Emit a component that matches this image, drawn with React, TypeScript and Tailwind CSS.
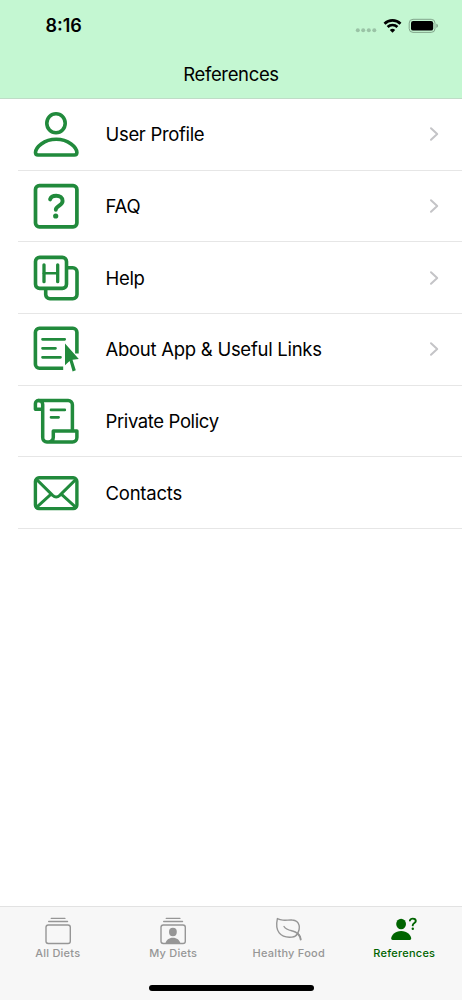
import type { ReactNode } from "react";

const svgProps = {
  viewBox: "0 0 48 48",
  fill: "none",
  stroke: "currentColor",
  strokeLinecap: "round",
  strokeLinejoin: "round",
  className: "size-12 shrink-0 text-[#218a3c]",
} as const;

const ProfileIcon = () => (
  <svg {...svgProps} strokeWidth="3.6">
    <ellipse cx="24" cy="13.2" rx="9.2" ry="9.5" />
    <path d="M24.2 29.3C12 29.3 3.500 37.500 3.500 42.600c0 1.600.9 2.400 2.500 2.400h36.400c1.600 0 2.500-.8 2.500-2.400C44.900 37.500 36.400 29.300 24.200 29.300Z" />
  </svg>
);

const FaqIcon = () => (
  <svg {...svgProps} strokeWidth="3.7">
    <rect x="3.500" y="3.700" width="41.400" height="41.200" rx="3.800" />
    <path strokeWidth="3.900" d="M18.100 17.400c.7-2.400 2.900-3.700 6.100-3.700 3.800 0 6.400 2.100 6.400 5.200 0 3.700-4.100 4.500-6 7-.7.8-.8 1.200-.8 1.900" />
    <circle cx="23.700" cy="34" r="2.600" fill="currentColor" stroke="none" />
  </svg>
);

const HelpIcon = () => (
  <svg {...svgProps} strokeWidth="3.600">
    <rect x="3.500" y="3.400" width="31" height="31" rx="4.200" />
    <path strokeLinecap="butt" d="M35 13.800h5.800a4.200 4.200 0 0 1 4.200 4.200v22.600a4.200 4.200 0 0 1-4.200 4.200H17.900a4.200 4.200 0 0 1-4.200-4.200V35.200" />
    <path strokeWidth="3.300" d="M12 10.800v16.900M25.700 10.800v16.900" />
    <path strokeWidth="2.600" d="M12 19.300h13.700" />
  </svg>
);

const AboutIcon = () => (
  <svg {...svgProps} strokeWidth="3.600">
    <path strokeLinecap="butt" d="M31.200 43.200H7.400a4 4 0 0 1-4-4V7.300a4 4 0 0 1 4-4h33.500a4 4 0 0 1 4 4v21.300" />
    <path strokeWidth="2.700" d="M10.500 14.300h22.200M10.500 23.300h13M10.500 32.300h18" />
    <path fill="currentColor" stroke="none" d="M33 18.600v21.600l4.600-4.100 3 10.400 3.200-1.200-3.300-10.600 6.300-.7Z" />
  </svg>
);

const PolicyIcon = () => (
  <svg {...svgProps} strokeWidth="3.500">
    <path d="M6.600 3.600h29.600a4.200 4.200 0 0 1 4.200 4.200v25.500" />
    <path d="M10.700 12.200H3.400V6.800a3.200 3.200 0 0 1 3.200-3.200c2.300 0 4.100 1.700 4.100 4v33a4.300 4.300 0 0 0 4.300 4.400h25.500a4.400 4.400 0 0 0 4.400-4.400v-6.700H21.300v6.300a4.700 4.700 0 0 1-4.700 4.800" />
    <path strokeWidth="2.700" d="M19 12.900h13.800M19 20.300h7.600" />
  </svg>
);

const MailIcon = () => (
  <svg {...svgProps} strokeWidth="3.400">
    <rect x="3.400" y="8.800" width="41.500" height="30.800" rx="3.600" />
    <path strokeWidth="2.900" d="m4.500 10.400 16.200 16q3.500 3.300 7 0l16.200-16M4.500 38.400l14.600-13.200M43.900 38.400 29.300 25.200" />
  </svg>
);

const Chevron = () => (
  <svg viewBox="0 0 10 16" fill="none" stroke="#c4c4c7" strokeWidth="2" strokeLinecap="round" strokeLinejoin="round" className="h-4 w-2.5">
    <path d="m2 2.200 6.200 5.800L2 13.800" />
  </svg>
);

const rows: { label: string; icon: ReactNode; link?: boolean; track: string }[] = [
  { label: "User Profile", icon: <ProfileIcon />, link: true, track: "tracking-[-0.320px]" },
  { label: "FAQ", icon: <FaqIcon />, link: true, track: "tracking-[-0.200px]" },
  { label: "Help", icon: <HelpIcon />, link: true, track: "tracking-[-0.300px]" },
  { label: "About App & Useful Links", icon: <AboutIcon />, link: true, track: "tracking-[-0.270px]" },
  { label: "Private Policy", icon: <PolicyIcon />, track: "tracking-[-0.380px]" },
  { label: "Contacts", icon: <MailIcon />, track: "tracking-[-0.230px]" },
];

const tabSvg = {
  viewBox: "0 0 30 30",
  fill: "none",
  stroke: "currentColor",
  strokeWidth: 1.4,
  strokeLinecap: "round",
  strokeLinejoin: "round",
  className: "size-[30px]",
} as const;

const Stack = () => (
  <>
    <path d="M8.300 3.400h13.600M5.700 6.500h18.800" />
    <rect x="3" y="10" width="24.300" height="18.500" rx="2.300" />
  </>
);

const tabs: { label: string; active?: boolean; icon: ReactNode }[] = [
  { label: "All Diets", icon: <svg {...tabSvg}><Stack /></svg> },
  {
    label: "My Diets",
    icon: (
      <svg {...tabSvg}>
        <Stack />
        <g fill="currentColor" stroke="none">
          <ellipse cx="14.900" cy="17" rx="3.900" ry="4.200" />
          <path d="M7.400 28.500c.6-3.600 3.600-5.800 7.500-5.800s6.900 2.200 7.500 5.800Z" />
        </g>
      </svg>
    ),
  },
  {
    label: "Healthy Food",
    icon: (
      <svg {...tabSvg}>
        <path d="M3.400 3.600C2.200 9 2.400 14.300 5.200 17.900c2.800 3.600 7.800 4.700 12.800 4.200 2.600-.3 4.300-1.200 5.300-3.200 1.600-2.800 2.500-5.700 1.800-8.600-.8-3.200-3.400-5.100-6.900-5.300-3.400-.3-6 .5-9.300.1-2.200-.2-4-.8-5.500-1.500Z" />
        <path d="M10 11.500c1.900 3.100 5 3.600 8.600 4.500 4.500 1.200 6.500 3.200 7.500 6" />
        <path strokeWidth="2" d="M24 18.900c1.600 1.600 2.500 3.400 2.700 5.500" />
      </svg>
    ),
  },
  {
    label: "References",
    active: true,
    icon: (
      <svg {...tabSvg}>
        <g fill="currentColor" stroke="none">
          <ellipse cx="12.100" cy="9" rx="4.900" ry="5.300" />
          <path d="M3.600 25c-.9 0-1.400-.5-1.400-1.400 0-3.300 4-7.600 9.900-7.600s10.100 4.300 10.100 7.600c0 .9-.5 1.400-1.400 1.400Z" />
          <circle cx="23.800" cy="13.700" r="1.200" />
        </g>
        <path strokeWidth="1.900" d="M20.900 5.500c.3-1.200 1.300-1.900 2.900-1.900s3 .9 3 2.500c0 1.900-2.900 2-3.100 4.200" />
      </svg>
    ),
  },
];

export default function App() {
  return (
    <div className="flex h-[1000px] w-full flex-col bg-white font-['Inter','Liberation_Sans',sans-serif] text-black">
      <header className="h-[99px] shrink-0 border-b border-[#bfdcc7] bg-[#c4f7d2]">
        <div className="flex h-[50px] items-center justify-between pt-px pr-[23px] pl-[45.500px]">
          <span className="text-[18px] font-semibold">8:16</span>
          <svg viewBox="0 0 84 20" className="h-5 w-[84px]">
            <g fill="#9ac3a6">
              <circle cx="2.800" cy="14.300" r="2" />
              <circle cx="8.200" cy="14.300" r="2" />
              <circle cx="13.800" cy="14.300" r="2" />
              <circle cx="19.300" cy="14.300" r="2" />
            </g>
            <g fill="none" stroke="black" strokeWidth="2.700">
              <path d="M29.500 7.700a11.500 11.500 0 0 1 16 0" />
              <path d="M32.600 11a7 7 0 0 1 9.800 0" />
            </g>
            <path d="m37.500 16.700-2.700-2.800a4 4 0 0 1 5.400 0Z" />
            <rect x="54.200" y="3.300" width="25.800" height="13.100" rx="3.800" fill="none" stroke="#83a68c" />
            <rect x="56" y="5.100" width="22.200" height="9.500" rx="2.200" />
            <path fill="#83a68c" d="M81.300 7.700c1.100.3 1.700 1.100 1.700 2.100s-.6 1.800-1.700 2.100Z" />
          </svg>
        </div>
        <h1 className="text-center text-[18.500px] leading-[48px] tracking-[-0.350px]">References</h1>
      </header>

      <main className="flex-1">
        <ul>
          {rows.map((row) => (
            <li key={row.label} className="ml-[18px] flex h-[71.700px] items-center border-b border-[#e6e6e6] pr-[23px] pl-[14px]">
              {row.icon}
              <span className={`ml-[25.500px] flex-1 pt-[1.500px] text-[18.500px] ${row.track}`}>{row.label}</span>
              {row.link && <Chevron />}
            </li>
          ))}
        </ul>
      </main>

      <footer className="flex h-[94px] shrink-0 flex-col items-center border-t border-[#e2e2e2] bg-[#f7f7f7]">
        <nav className="grid w-full grid-cols-4 pt-2">
          {tabs.map((tab) => (
            <div key={tab.label} className={`flex flex-col items-center ${tab.active ? "text-[#006400]" : "text-[#969696]"}`}>
              {tab.icon}
              <span className="text-[11px] leading-[17px] font-medium tracking-[0.240px] whitespace-nowrap">{tab.label}</span>
            </div>
          ))}
        </nav>
        <div className="mt-[23px] h-[6px] w-[165px] rounded-full bg-black" />
      </footer>
    </div>
  );
}
